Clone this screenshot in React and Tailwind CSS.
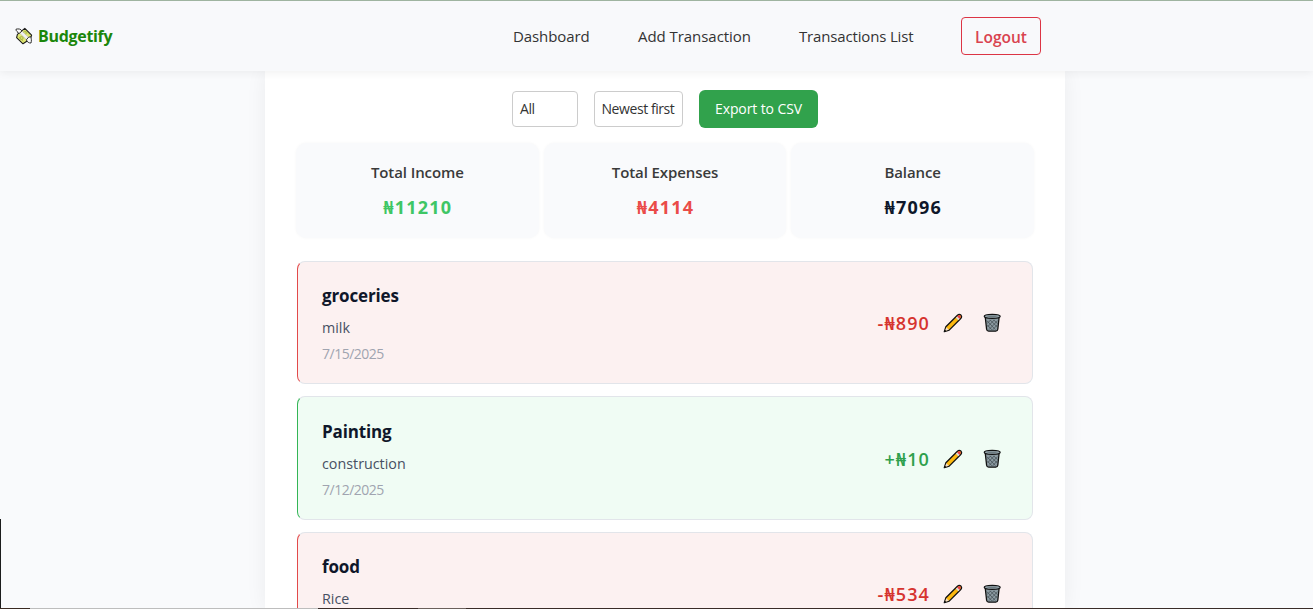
const transactions = [
  { title: 'groceries', note: 'milk', date: '7/15/2025', amount: '-₦890', kind: 'expense' },
  { title: 'Painting', note: 'construction', date: '7/12/2025', amount: '+₦10', kind: 'income' },
  { title: 'food', note: 'Rice', amount: '-₦534', kind: 'expense' },
];

function MoneyIcon() {
  return (
    <svg width="18" height="18" viewBox="0 0 18 18" fill="none">
      <path d="M2.4 7.4 9.8 1.4 16.6 8.2 15.2 12 8 16.8 1.6 10.6Z" fill="#e3ea74" stroke="#1d1d1b" strokeWidth="1.1" strokeLinejoin="round" />
      <path d="M4 9.8 8.4 14.4M10 3.4l4.6 4.6" stroke="#b7c44c" strokeWidth="1" />
      <circle cx="9.8" cy="6" r="1.6" fill="#d5df68" stroke="#8b9836" strokeWidth=".6" />
      <circle cx="6.6" cy="11" r="1.6" fill="#d5df68" stroke="#8b9836" strokeWidth=".6" />
      <path d="m4.6 6 2.4-1.8 6.8 6.4-2.2 2.2Z" fill="#f1f1f1" stroke="#b4b4b4" strokeWidth=".5" />
      <path d="M1 2.2C3.4 1.6 5.8 1.8 7 4L4.4 6.2C2.6 6 2.2 5.4 2.4 4.6 1.4 4.2.9 3.2 1 2.2Z" fill="#fafafa" stroke="#1d1d1b" strokeWidth=".9" />
      <path d="M13.4 10.4 11.4 12.8C12 15 14 16.2 16 16 16.7 13.8 16.4 11.6 15.6 9.6Z" fill="#fafafa" stroke="#1d1d1b" strokeWidth=".9" />
    </svg>
  );
}

function PencilIcon() {
  return (
    <svg width="20" height="20" viewBox="0 0 20 20" fill="none">
      <path d="M1.3 18.7 2.9 13.8 14.2 2.5Q16.2.6 17.9 2.1 19.4 3.8 17.5 5.8L6.2 17.1Z" fill="#fdb90f" stroke="#111" strokeWidth="1.3" strokeLinejoin="round" />
      <path d="M2 18 3.3 14.2 5.8 16.7Z" fill="#f6dfc8" />
      <path d="m1.3 18.7.7-2 1.3 1.3Z" fill="#111" />
      <path d="m12.9 4.8 1.5-1.5 2.4 2.4-1.5 1.5Z" fill="#d9d9dc" />
      <path d="m14.2 3.5 1.1-1q1.2-.7 2 .1.8.9.1 2l-.9 1.1Z" fill="#e83a4a" />
    </svg>
  );
}

function TrashIcon() {
  return (
    <svg width="20" height="20" viewBox="0 0 20 20" fill="none">
      <path d="M2.3 4.5 3.6 16.3Q3.8 18.2 5.7 18.2H12.7Q14.6 18.2 14.8 16.3L16.1 4.5Z" fill="#8b9aa1" stroke="#111" strokeWidth="1.3" />
      <path d="m3.8 7.6 8.6 9M7 6.8l7 7M4.2 11.8l4.6 5M10.6 6.8l4 4M14.6 7.6 6 16.6M11.4 6.8 4.6 13.8M14.2 12 9.6 16.9M7.8 6.8 4 10.6" stroke="#465157" strokeWidth=".8" />
      <path d="M1.2 3.2Q1.2 1.3 9.2 1.3T17.2 3.2Q17.2 5.3 9.2 5.3T1.2 3.2Z" fill="#95a5ac" stroke="#111" strokeWidth="1.2" />
      <path d="M3.2 3.2Q9.2 2.2 15.2 3.2 9.2 4.4 3.2 3.2Z" fill="#5f6c72" />
    </svg>
  );
}

function Navbar() {
  return (
    <header className="relative z-10 flex h-[71px] w-full items-center border-t border-[#9fb4a0] bg-[#f8f9fb] shadow-[0_2px_8px_rgba(0,0,0,0.06)]">
      <div className="flex w-[513px] items-center gap-[5px] pl-[15px]">
        <MoneyIcon />
        <span className="text-[16px] leading-6 font-bold tracking-[-0.3px] text-[#1b870b]">Budgetify</span>
      </div>
      <nav className="flex items-center text-[15px] leading-6 text-[#333]">
        <a className="w-[125px] tracking-[-0.1px] whitespace-nowrap">Dashboard</a>
        <a className="w-[161px] tracking-[-0.05px] whitespace-nowrap">Add Transaction</a>
        <a className="w-[162px] tracking-[-0.16px] whitespace-nowrap">Transactions List</a>
        <button className="h-[38px] w-[80px] rounded-[4px] border border-[#dc3545] pt-px text-[15.5px] font-semibold text-[#d9434f]">Logout</button>
      </nav>
    </header>
  );
}

function SummaryCard({ label, value, valueCls }) {
  return (
    <div className="flex h-[95px] flex-1 flex-col items-center rounded-[10px] bg-[#f9fafc] pt-[17px] shadow-[0_0_3px_rgba(0,0,0,0.04)]">
      <h3 className="text-[15px] leading-6 font-semibold tracking-[-0.1px] text-[#3a3a3a]">{label}</h3>
      <p className={`mt-[11px] pl-px text-[18px] leading-6 font-bold tracking-[1.2px] ${valueCls}`}>{value}</p>
    </div>
  );
}

function TransactionRow({ item }) {
  const income = item.kind === 'income';
  return (
    <li
      className={`flex h-[123.2px] shrink-0 justify-between rounded-[8px] border border-[#e2e5ea] pl-6 ${
        income ? 'border-l-[#34b556] bg-[#f0fcf4]' : 'border-l-[#e24a4a] bg-[#fcf1f1]'
      }`}
    >
      <div className="pt-[20.2px]">
        <h4 className="text-[17px] leading-7 font-bold tracking-[-0.15px] text-[#0f172a]">{item.title}</h4>
        <p className="mt-[6px] text-[14.3px] leading-6 text-[#475063]">{item.note}</p>
        {item.date && <p className="mt-[2px] text-[14px] leading-6 tracking-[-0.5px] text-[#a0a4b0]">{item.date}</p>}
      </div>
      <div className="flex h-[122.4px] items-center pr-[29px]">
        <span className={`text-[18px] leading-7 font-semibold tracking-[1.1px] ${income ? 'text-[#2fa04c]' : 'text-[#d6342f]'}`}>{item.amount}</span>
        <button className="ml-[13px]"><PencilIcon /></button>
        <button className="ml-5"><TrashIcon /></button>
      </div>
    </li>
  );
}

export default function App() {
  return (
    <div className="relative flex h-[609px] w-[1313px] flex-col overflow-hidden bg-[#f9fafc] font-['Open_Sans','Noto_Sans',sans-serif]">
      <Navbar />
      <main className="ml-[265px] h-[538px] w-[800px] bg-white px-8 pt-[19px] shadow-[0_0_20px_rgba(0,0,0,0.06)]">
        <div className="flex h-[38px] items-center justify-center gap-4 text-[14px]">
          <div className="flex h-[36px] w-[66px] items-center rounded-[4px] border border-[#ccc] pb-px pl-[7px] tracking-[-0.4px] text-[#333]">All</div>
          <div className="flex h-[36px] w-[89px] items-center whitespace-nowrap rounded-[4px] border border-[#ccc] pb-px pl-[6.5px] tracking-[-0.43px] text-[#333]">Newest first</div>
          <button className="h-[38px] w-[119px] whitespace-nowrap rounded-[6px] bg-[#31a24c] pb-px tracking-[-0.1px] text-white">Export to CSV</button>
        </div>
        <section className="-mx-px mt-[15px] flex gap-[5px]">
          <SummaryCard label="Total Income" value="₦11210" valueCls="text-[#3fc665]" />
          <SummaryCard label="Total Expenses" value="₦4114" valueCls="text-[#ea4b48]" />
          <SummaryCard label="Balance" value="₦7096" valueCls="text-[#0f172a]" />
        </section>
        <ul className="mt-[22.8px] flex h-[348px] flex-col gap-[12.4px] overflow-hidden">
          {transactions.map((item) => <TransactionRow key={item.title} item={item} />)}
        </ul>
      </main>
      <div className="absolute top-[519px] left-0 h-[90px] w-px bg-[#1c1c1c]" />
      <div className="absolute bottom-0 left-0 flex h-px w-full">
        <div className="w-[30px] bg-[#3a2a22]" />
        <div className="w-[288px] bg-[#bdbdbd]" />
        <div className="w-[100px] bg-[#3a2c28]" />
        <div className="w-[48px] bg-[#6b605c]" />
        <div className="flex-1 bg-[#3a2c28]" />
      </div>
    </div>
  );
}
